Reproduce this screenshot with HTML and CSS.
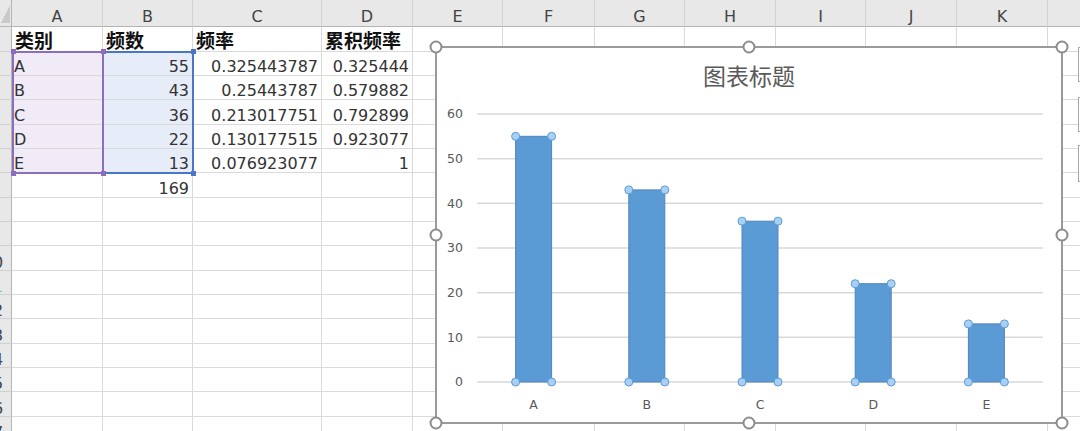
FILE: index.html
```html
<!DOCTYPE html>
<html lang="zh-CN">
<head>
<meta charset="utf-8">
<title>频数分布</title>
<link rel="stylesheet" href="styles.css">
</head>
<body>
<div class="sheet">
  <div class="row hdr">
    <div class="corner"></div><div>A</div><div>B</div><div>C</div><div>D</div><div>E</div><div>F</div><div>G</div><div>H</div><div>I</div><div>J</div><div>K</div><div></div>
  </div>
  <div class="row">
    <div class="rh"><span>1</span></div><div class="th">类别</div><div class="th">频数</div><div class="th">频率</div><div class="th">累积频率</div><div></div><div></div><div></div><div></div><div></div><div></div><div></div><div></div>
  </div>
  <div class="row">
    <div class="rh"><span>2</span></div><div class="sa">A</div><div class="sb num">55</div><div class="num">0.325443787</div><div class="num">0.325444</div><div></div><div></div><div></div><div></div><div></div><div></div><div></div><div></div>
  </div>
  <div class="row">
    <div class="rh"><span>3</span></div><div class="sa">B</div><div class="sb num">43</div><div class="num">0.25443787</div><div class="num">0.579882</div><div></div><div></div><div></div><div></div><div></div><div></div><div></div><div></div>
  </div>
  <div class="row">
    <div class="rh"><span>4</span></div><div class="sa">C</div><div class="sb num">36</div><div class="num">0.213017751</div><div class="num">0.792899</div><div></div><div></div><div></div><div></div><div></div><div></div><div></div><div></div>
  </div>
  <div class="row">
    <div class="rh"><span>5</span></div><div class="sa">D</div><div class="sb num">22</div><div class="num">0.130177515</div><div class="num">0.923077</div><div></div><div></div><div></div><div></div><div></div><div></div><div></div><div></div>
  </div>
  <div class="row">
    <div class="rh"><span>6</span></div><div class="sa">E</div><div class="sb num">13</div><div class="num">0.076923077</div><div class="num">1</div><div></div><div></div><div></div><div></div><div></div><div></div><div></div><div></div>
  </div>
  <div class="row">
    <div class="rh"><span>7</span></div><div></div><div class="num">169</div><div></div><div></div><div></div><div></div><div></div><div></div><div></div><div></div><div></div><div></div>
  </div>
  <div class="row">
    <div class="rh"><span>8</span></div><div></div><div></div><div></div><div></div><div></div><div></div><div></div><div></div><div></div><div></div><div></div><div></div>
  </div>
  <div class="row">
    <div class="rh"><span>9</span></div><div></div><div></div><div></div><div></div><div></div><div></div><div></div><div></div><div></div><div></div><div></div><div></div>
  </div>
  <div class="row">
    <div class="rh"><span>10</span></div><div></div><div></div><div></div><div></div><div></div><div></div><div></div><div></div><div></div><div></div><div></div><div></div>
  </div>
  <div class="row">
    <div class="rh"><span class="hl">11</span></div><div></div><div></div><div></div><div></div><div></div><div></div><div></div><div></div><div></div><div></div><div></div><div></div>
  </div>
  <div class="row">
    <div class="rh"><span>12</span></div><div></div><div></div><div></div><div></div><div></div><div></div><div></div><div></div><div></div><div></div><div></div><div></div>
  </div>
  <div class="row">
    <div class="rh"><span>13</span></div><div></div><div></div><div></div><div></div><div></div><div></div><div></div><div></div><div></div><div></div><div></div><div></div>
  </div>
  <div class="row">
    <div class="rh"><span>14</span></div><div></div><div></div><div></div><div></div><div></div><div></div><div></div><div></div><div></div><div></div><div></div><div></div>
  </div>
  <div class="row">
    <div class="rh"><span>15</span></div><div></div><div></div><div></div><div></div><div></div><div></div><div></div><div></div><div></div><div></div><div></div><div></div>
  </div>
  <div class="row">
    <div class="rh"><span>16</span></div><div></div><div></div><div></div><div></div><div></div><div></div><div></div><div></div><div></div><div></div><div></div><div></div>
  </div>
  <div class="row">
    <div class="rh"><span>17</span></div><div></div><div></div><div></div><div></div><div></div><div></div><div></div><div></div><div></div><div></div><div></div><div></div>
  </div>
</div>

<div class="sel sel-b"><i class="h tr"></i><i class="h br"></i></div>
<div class="sel sel-a"><i class="h tl"></i><i class="h tr"></i><i class="h bl"></i><i class="h br"></i></div>

<svg class="chart" width="652" height="392" viewBox="428 39 652 392" xmlns="http://www.w3.org/2000/svg">
  <rect x="436" y="47" width="626" height="376" fill="#ffffff" stroke="#9a9a9a" stroke-width="2"/>
  <text class="title" x="749" y="85" text-anchor="middle">图表标题</text>
  <g stroke="#d9d9d9" stroke-width="1.5">
    <line x1="477" y1="114" x2="1043" y2="114"/>
    <line x1="477" y1="158.7" x2="1043" y2="158.7"/>
    <line x1="477" y1="203.3" x2="1043" y2="203.3"/>
    <line x1="477" y1="248" x2="1043" y2="248"/>
    <line x1="477" y1="292.7" x2="1043" y2="292.7"/>
    <line x1="477" y1="337.3" x2="1043" y2="337.3"/>
    <line x1="477" y1="382" x2="1043" y2="382"/>
  </g>
  <g class="axis" text-anchor="end">
    <text x="463" y="118.4">60</text>
    <text x="463" y="163.1">50</text>
    <text x="463" y="207.7">40</text>
    <text x="463" y="252.4">30</text>
    <text x="463" y="297.1">20</text>
    <text x="463" y="341.7">10</text>
    <text x="463" y="386.4">0</text>
  </g>
  <g fill="#5b9bd5" stroke="#5283bd" stroke-width="1">
    <rect x="515.6" y="136.3" width="36" height="245.7"/>
    <rect x="628.8" y="189.9" width="36" height="192.1"/>
    <rect x="742" y="221.2" width="36" height="160.8"/>
    <rect x="855.2" y="283.7" width="36" height="98.3"/>
    <rect x="968.4" y="323.9" width="36" height="58.1"/>
  </g>
  <g class="axis" text-anchor="middle">
    <text x="533.6" y="408.5">A</text>
    <text x="646.8" y="408.5">B</text>
    <text x="760" y="408.5">C</text>
    <text x="873.2" y="408.5">D</text>
    <text x="986.4" y="408.5">E</text>
  </g>
  <g fill="#a9d0f4" stroke="#5b9bd5" stroke-width="1">
    <circle cx="515.6" cy="136.3" r="4"/><circle cx="551.6" cy="136.3" r="4"/><circle cx="515.6" cy="382" r="4"/><circle cx="551.6" cy="382" r="4"/>
    <circle cx="628.8" cy="189.9" r="4"/><circle cx="664.8" cy="189.9" r="4"/><circle cx="628.8" cy="382" r="4"/><circle cx="664.8" cy="382" r="4"/>
    <circle cx="742" cy="221.2" r="4"/><circle cx="778" cy="221.2" r="4"/><circle cx="742" cy="382" r="4"/><circle cx="778" cy="382" r="4"/>
    <circle cx="855.2" cy="283.7" r="4"/><circle cx="891.2" cy="283.7" r="4"/><circle cx="855.2" cy="382" r="4"/><circle cx="891.2" cy="382" r="4"/>
    <circle cx="968.4" cy="323.9" r="4"/><circle cx="1004.4" cy="323.9" r="4"/><circle cx="968.4" cy="382" r="4"/><circle cx="1004.4" cy="382" r="4"/>
  </g>
  <g fill="#ffffff" stroke="#8c8c8c" stroke-width="2">
    <circle cx="436" cy="47" r="5.5"/><circle cx="749" cy="47" r="5.5"/><circle cx="1062" cy="47" r="5.5"/>
    <circle cx="436" cy="235" r="5.5"/><circle cx="1062" cy="235" r="5.5"/>
    <circle cx="436" cy="423" r="5.5"/><circle cx="749" cy="423" r="5.5"/><circle cx="1062" cy="423" r="5.5"/>
  </g>
  <g fill="#ffffff" stroke="#a6a6a6" stroke-width="1">
    <rect x="1078.5" y="47.5" width="30" height="34"/>
    <rect x="1078.5" y="97.5" width="30" height="34"/>
    <rect x="1078.5" y="145.5" width="30" height="36"/>
  </g>
</svg>
</body>
</html>
```

FILE: styles.css
```css
html, body {
  margin: 0;
  padding: 0;
}

body {
  width: 1080px;
  height: 431px;
  overflow: hidden;
  background: #ffffff;
  position: relative;
  font-family: "DejaVu Sans", "Noto Sans CJK SC", sans-serif;
}

.sheet {
  display: flex;
  flex-direction: column;
}

.row {
  display: grid;
  grid-template-columns: 12px 91px 90px 129px 91px 90px 92px 90px 91px 90px 91px 91px 92px;
  height: 24.33px;
  flex: none;
}

.row > div {
  box-sizing: border-box;
  border-right: 1px solid #dadada;
  border-bottom: 1px solid #dadada;
  overflow: hidden;
  white-space: nowrap;
  display: flex;
  align-items: flex-end;
  padding: 0 2px;
  font-size: 16px;
  line-height: 16px;
  color: #333333;
}

.row > .num {
  justify-content: flex-end;
  padding-right: 3px;
}

.row > .th {
  font-family: "Noto Sans CJK SC", sans-serif;
  font-weight: bold;
  font-size: 19px;
  line-height: 22px;
  color: #111111;
  padding-left: 3px;
  overflow: visible;
}

.row > .sa {
  background: #f0ebf6;
}

.row > .sb {
  background: #e7edf8;
}

.hdr {
  height: 27.33px;
  background: #e8e8e8;
}

.hdr > div {
  border-right-color: #d2d2d2;
  border-bottom-color: #b4b4b4;
  justify-content: center;
  color: #444444;
  line-height: 18px;
}

.hdr > .corner {
  border-right-color: #b4b4b4;
  background: linear-gradient(to bottom right, transparent 50%, #c9c9c9 50%) no-repeat;
  background-size: 9px 18px;
  background-position: 1px 5px;
}

.row > .rh {
  background: #e8e8e8;
  border-right-color: #b4b4b4;
  border-bottom-color: #d0d0d0;
  padding: 0;
}

.rh span {
  flex: none;
  width: 34px;
  margin-left: -24px;
  text-align: center;
  color: #444444;
  line-height: 15px;
}

.rh span.hl {
  color: #7bbfae;
}

.sel {
  position: absolute;
  box-sizing: border-box;
  top: 50.7px;
  height: 123.6px;
}

.sel-a {
  left: 12px;
  width: 92px;
  border: 2px solid #8b6fbd;
}

.sel-b {
  left: 102px;
  width: 92px;
  border: 2px solid #4a76c6;
}

.sel .h {
  position: absolute;
  width: 5px;
  height: 5px;
}

.sel-a .h {
  background: #8b6fbd;
}

.sel-b .h {
  background: #4a76c6;
}

.sel .tl { left: -3.5px; top: -3.5px; }
.sel .tr { right: -3.5px; top: -3.5px; }
.sel .bl { left: -3.5px; bottom: -3.5px; }
.sel .br { right: -3.5px; bottom: -3.5px; }

.chart {
  position: absolute;
  left: 428px;
  top: 39px;
  display: block;
}

.chart .title {
  font-family: "Noto Sans CJK SC", sans-serif;
  font-size: 23px;
  fill: #595959;
}

.chart .axis {
  font-family: "DejaVu Sans", sans-serif;
  font-size: 12.5px;
  fill: #595959;
}
```
